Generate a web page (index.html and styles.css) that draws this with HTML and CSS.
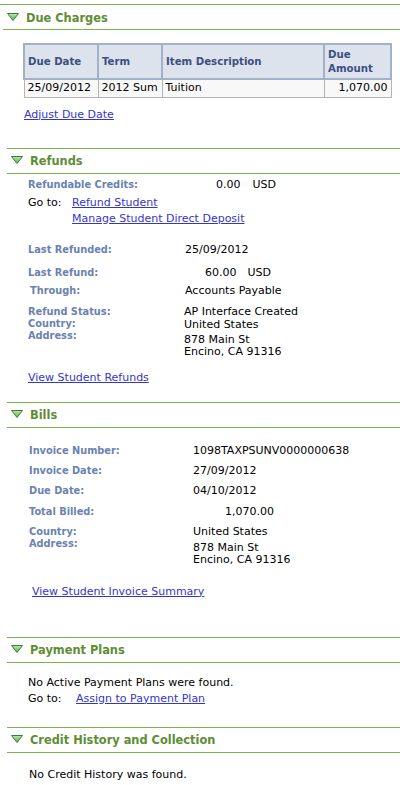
FILE: index.html
```html
<!DOCTYPE html>
<html>
<head>
<meta charset="utf-8">
<link rel="stylesheet" href="styles.css">
</head>
<body>
<div class="page">

  <section class="sec first">
    <div class="hdr">
      <svg class="tri" width="12" height="8" viewBox="0 0 12 8"><defs><linearGradient id="g1" x1="0" y1="0" x2="0" y2="1"><stop offset="0" stop-color="#b9e8b0"/><stop offset="1" stop-color="#54b04a"/></linearGradient></defs><polygon points="0.5,0.5 11.5,0.5 6,7.5" fill="url(#g1)" stroke="#3d7a3a" stroke-width="1"/></svg>
      <h2>Due Charges</h2>
    </div>
    <div class="body charges">
      <table class="grid">
        <colgroup><col class="c1"><col class="c2"><col class="c3"><col class="c4"></colgroup>
        <thead>
          <tr><th>Due Date</th><th>Term</th><th>Item Description</th><th>Due<br>Amount</th></tr>
        </thead>
        <tbody>
          <tr><td>25/09/2012</td><td>2012 Sum</td><td>Tuition</td><td class="num">1,070.00</td></tr>
        </tbody>
      </table>
      <a class="link adjust" href="#">Adjust Due Date</a>
    </div>
  </section>

  <section class="sec refunds">
    <div class="hdr">
      <svg class="tri" width="12" height="8" viewBox="0 0 12 8"><defs><linearGradient id="g2" x1="0" y1="0" x2="0" y2="1"><stop offset="0" stop-color="#b9e8b0"/><stop offset="1" stop-color="#54b04a"/></linearGradient></defs><polygon points="0.5,0.5 11.5,0.5 6,7.5" fill="url(#g2)" stroke="#3d7a3a" stroke-width="1"/></svg>
      <h2>Refunds</h2>
    </div>
    <div class="body rf">
      <div class="row r-credits"><span class="lbl w188">Refundable Credits:</span><span>0.00</span><span class="cur">USD</span></div>
      <div class="goto g-ref">
        <span class="gl">Go to:</span>
        <div class="links">
          <a class="link" href="#">Refund Student</a>
          <a class="link" href="#">Manage Student Direct Deposit</a>
        </div>
      </div>
      <div class="row r-lastd"><span class="lbl w157">Last Refunded:</span><span>25/09/2012</span></div>
      <div class="row r-last"><span class="lbl w177">Last Refund:</span><span>60.00</span><span class="cur c-last">USD</span></div>
      <div class="row r-thr"><span class="lbl w157 thr">Through:</span><span>Accounts Payable</span></div>
      <div class="pair r-stat">
        <div class="lbls w156"><span class="lbl">Refund Status:</span><span class="lbl">Country:</span><span class="lbl">Address:</span></div>
        <div class="vals">
          <span>AP Interface Created</span>
          <span class="v-country">United States</span>
          <span class="v-addr">878 Main St</span>
          <span>Encino, CA 91316</span>
        </div>
      </div>
      <a class="link view-ref" href="#">View Student Refunds</a>
    </div>
  </section>

  <section class="sec bills">
    <div class="hdr">
      <svg class="tri" width="12" height="8" viewBox="0 0 12 8"><defs><linearGradient id="g3" x1="0" y1="0" x2="0" y2="1"><stop offset="0" stop-color="#b9e8b0"/><stop offset="1" stop-color="#54b04a"/></linearGradient></defs><polygon points="0.5,0.5 11.5,0.5 6,7.5" fill="url(#g3)" stroke="#3d7a3a" stroke-width="1"/></svg>
      <h2>Bills</h2>
    </div>
    <div class="body bl">
      <div class="row b-inv"><span class="lbl w164">Invoice Number:</span><span>1098TAXPSUNV0000000638</span></div>
      <div class="row b-next"><span class="lbl w164">Invoice Date:</span><span>27/09/2012</span></div>
      <div class="row b-next"><span class="lbl w164">Due Date:</span><span>04/10/2012</span></div>
      <div class="row b-tot"><span class="lbl w196">Total Billed:</span><span>1,070.00</span></div>
      <div class="pair b-addr">
        <div class="lbls w164"><span class="lbl">Country:</span><span class="lbl">Address:</span></div>
        <div class="vals">
          <span>United States</span>
          <span class="v-addr2">878 Main St</span>
          <span>Encino, CA 91316</span>
        </div>
      </div>
      <a class="link view-inv" href="#">View Student Invoice Summary</a>
    </div>
  </section>

  <section class="sec plans">
    <div class="hdr">
      <svg class="tri" width="12" height="8" viewBox="0 0 12 8"><defs><linearGradient id="g4" x1="0" y1="0" x2="0" y2="1"><stop offset="0" stop-color="#b9e8b0"/><stop offset="1" stop-color="#54b04a"/></linearGradient></defs><polygon points="0.5,0.5 11.5,0.5 6,7.5" fill="url(#g4)" stroke="#3d7a3a" stroke-width="1"/></svg>
      <h2>Payment Plans</h2>
    </div>
    <div class="body pp">
      <p class="msg">No Active Payment Plans were found.</p>
      <div class="row p-goto"><span class="gl w48">Go to:</span><a class="link" href="#">Assign to Payment Plan</a></div>
    </div>
  </section>

  <section class="sec credit">
    <div class="hdr">
      <svg class="tri" width="12" height="8" viewBox="0 0 12 8"><defs><linearGradient id="g5" x1="0" y1="0" x2="0" y2="1"><stop offset="0" stop-color="#b9e8b0"/><stop offset="1" stop-color="#54b04a"/></linearGradient></defs><polygon points="0.5,0.5 11.5,0.5 6,7.5" fill="url(#g5)" stroke="#3d7a3a" stroke-width="1"/></svg>
      <h2>Credit History and Collection</h2>
    </div>
    <div class="body ch">
      <p class="msg m-credit">No Credit History was found.</p>
    </div>
  </section>

</div>
</body>
</html>
```

FILE: styles.css
```css
* { box-sizing: border-box; }
html, body { margin: 0; padding: 0; background: #ffffff; }
body {
  font-family: "DejaVu Sans", Verdana, sans-serif;
  font-size: 11px;
  line-height: 12px;
  color: #000000;
  width: 410px;
  height: 785px;
  overflow: hidden;
}
.page { padding-top: 4px; }

.sec { margin-left: 7px; width: 393px; }
.sec.first { margin-left: 0; width: 400px; }

.hdr {
  display: flex;
  align-items: center;
  height: 26px;
  border-top: 1px solid #79b34f;
  border-bottom: 1px solid #79b34f;
  padding-left: 4px;
}
.first .hdr { padding-left: 7px; border-bottom: none; position: relative; }
.first .hdr::after {
  content: "";
  position: absolute;
  left: 3px; right: 0; bottom: 0;
  border-bottom: 1px solid #79b34f;
}
.tri { display: block; margin-top: -2px; flex: none; }
.hdr h2 {
  margin: 0 0 0 7px;
  font-size: 11.4px;
  font-weight: bold;
  color: #5e8d34;
  line-height: 14px;
  padding-top: 1px;
}

a.link { color: #3434d0; text-decoration: underline; display: block; width: max-content; }

.lbl { font-weight: bold; font-size: 9.8px; color: #6a82b1; display: block; }
.row { display: flex; align-items: flex-start; }

/* Due charges */
.charges { padding-left: 23px; padding-top: 13px; }
.grid {
  border-collapse: collapse;
  width: 367px;
  table-layout: fixed;
  border: 1px solid #b0bdd2;
}
.c1 { width: 74px; } .c2 { width: 64px; } .c3 { width: 162px; } .c4 { width: 67px; }
.grid th {
  background: #dce3ed;
  color: #3d4f82;
  font-weight: bold;
  font-size: 10.2px;
  text-align: left;
  padding: 0 3px;
  height: 35px;
  border: 2px solid #a2b0c8;
  line-height: 14px;
  vertical-align: middle;
}
.grid td {
  background: #f8f8f8;
  height: 18px;
  padding: 0 3px;
  border: 1px solid #b5b5b5;
  border-top: none;
  white-space: nowrap;
  overflow: hidden;
}
.grid td.num { text-align: right; }
.adjust { margin-top: 11px; margin-left: 1px; }

/* Refunds */
.rf { padding-left: 21px; }
.r-credits { margin-top: 5px; }
.w188 { width: 188px; flex: none; }
.cur { margin-left: 12px; }
.c-last { margin-left: 11px; }
.goto { display: flex; margin-top: 4px; line-height: 16px; }
.gl { width: 44px; flex: none; }
.links a.link { line-height: 16px; }
.r-lastd { margin-top: 17px; }
.w157 { width: 157px; flex: none; }
.r-last { margin-top: 11px; }
.w177 { width: 177px; flex: none; }
.r-thr { margin-top: 6px; }
.thr { padding-left: 2px; }
.pair { display: flex; }
.r-stat { margin-top: 9px; }
.w156 { width: 156px; flex: none; }
.vals span { display: block; }
.v-country { margin-top: 1px; }
.v-addr { margin-top: 3px; }
.view-ref { margin-top: 14px; }

/* Bills */
.bl { padding-left: 22px; }
.b-inv { margin-top: 17px; }
.w164 { width: 164px; flex: none; }
.w196 { width: 196px; flex: none; }
.b-next { margin-top: 8px; }
.b-tot { margin-top: 9px; }
.b-addr { margin-top: 8px; }
.v-addr2 { margin-top: 4px; }
.view-inv { margin-top: 20px; margin-left: 3px; }

/* Payment plans */
.pp { padding-left: 21px; }
.msg { margin: 0; }
.pp .msg { margin-top: 14px; }
.p-goto { margin-top: 4px; }
.w48 { width: 48px; flex: none; }

/* Credit */
.ch { padding-left: 22px; }
.m-credit { margin-top: 16px; }

.refunds { margin-top: 27px; }
.bills { margin-top: 18px; }
.plans { margin-top: 39px; }
.credit { margin-top: 22px; }
```
